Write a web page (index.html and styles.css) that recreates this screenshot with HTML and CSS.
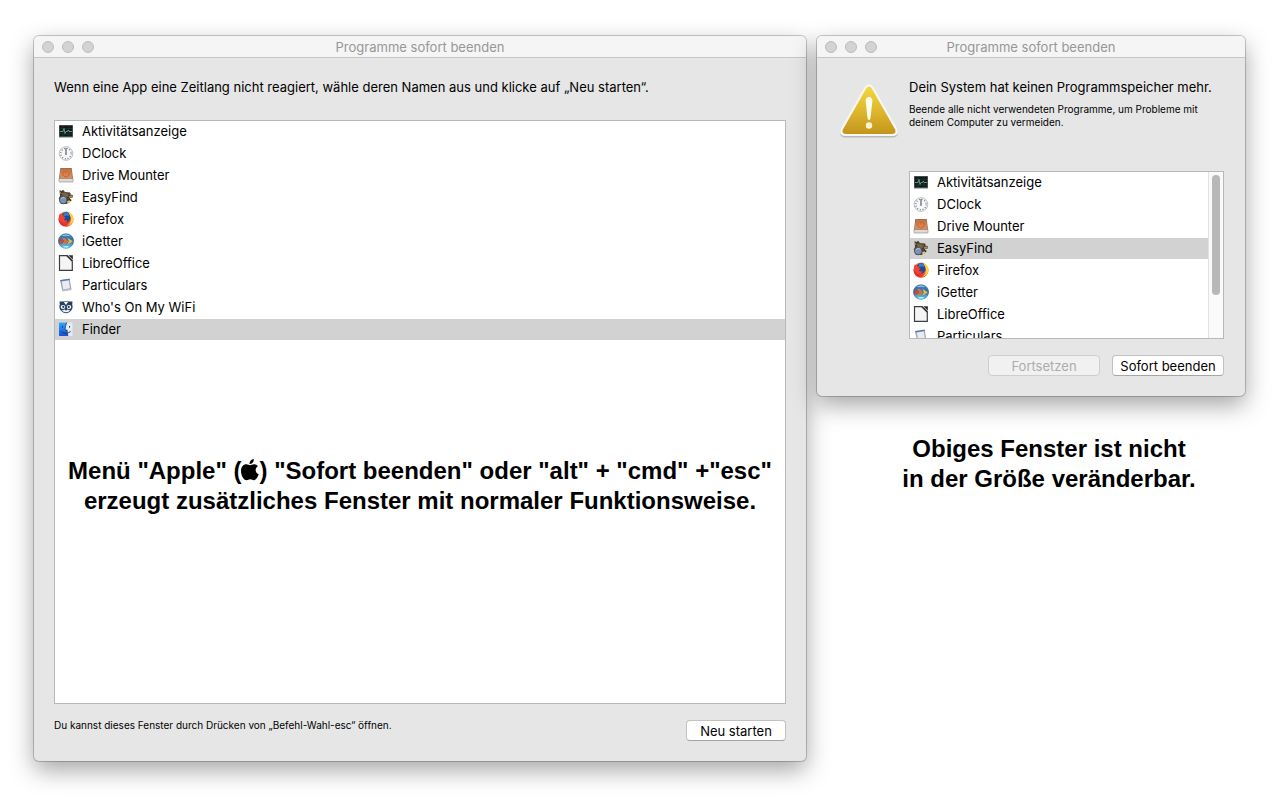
FILE: index.html
```html
<!DOCTYPE html>
<html lang="de">
<head>
    <meta charset="UTF-8">
    <meta name="viewport" content="width=device-width, initial-scale=1.0">
    <title>Programme sofort beenden</title>
    <link rel="stylesheet" href="styles.css">
</head>
<body>
    <svg class="icon-defs" width="0" height="0" aria-hidden="true">
        <defs>
            <linearGradient id="copper" x1="0" y1="0" x2="0" y2="1">
                <stop offset="0" stop-color="#b87449"/>
                <stop offset="1" stop-color="#d8925f"/>
            </linearGradient>
            <linearGradient id="fire" x1="0" y1="1" x2="1" y2="0">
                <stop offset="0" stop-color="#d8113f"/>
                <stop offset="0.45" stop-color="#f2452a"/>
                <stop offset="0.7" stop-color="#fb9b1e"/>
                <stop offset="1" stop-color="#ffe23e"/>
            </linearGradient>
            <linearGradient id="globe" x1="0" y1="0" x2="0" y2="1">
                <stop offset="0" stop-color="#4a86bb"/>
                <stop offset="0.5" stop-color="#1f6cae"/>
                <stop offset="1" stop-color="#6fdcf2"/>
            </linearGradient>
            <linearGradient id="finderLeft" x1="0" y1="0" x2="0" y2="1">
                <stop offset="0" stop-color="#29a8f8"/>
                <stop offset="1" stop-color="#1b50d8"/>
            </linearGradient>
            <linearGradient id="warn" x1="0" y1="0" x2="0" y2="1">
                <stop offset="0" stop-color="#f2d83c"/>
                <stop offset="0.55" stop-color="#dcb52c"/>
                <stop offset="1" stop-color="#c4941c"/>
            </linearGradient>
        </defs>
        <symbol id="icon-activity" viewBox="0 0 16 16">
            <rect x="1" y="2" width="14" height="12.5" fill="#777c7c"/>
            <rect x="1.5" y="2.500" width="13" height="11" fill="#101a1b"/>
            <path d="M2 5.500h12M2 11h12M5 3v10M11 3v10" stroke="#263b39" stroke-width=".6"/>
            <path d="M2 8.500h3l1-3 1 5 1-2h1.500l.8-1.500.8 1.500H14" fill="none" stroke="#6fb8a2" stroke-width=".8"/>
        </symbol>
        <symbol id="icon-clock" viewBox="0 0 16 16">
            <circle cx="8" cy="8.500" r="6.800" fill="#f8f8fa" stroke="#b2b5bb" stroke-width=".9"/>
            <circle cx="8" cy="8.500" r="5.200" fill="none" stroke="#7c8088" stroke-width="1.400" stroke-dasharray="1 1.722"/>
            <path d="M8 3V9" stroke="#646a76" stroke-width="1.300"/>
            <circle cx="8" cy="9" r="1" fill="#8b8f98"/>
        </symbol>
        <symbol id="icon-drive" viewBox="0 0 16 16">
            <path d="M2.300 1h11.400l1.300 10.500v3.300H1v-3.300z" fill="#8f6548"/>
            <path d="M2.600 1.500h10.800l.9 9.700H1.700z" fill="url(#copper)"/>
            <path d="M1 11.500h14v2.800q0 .7-.7.700H1.700q-.7 0-.7-.7z" fill="#dedbd6" stroke="#8d8279" stroke-width=".6"/>
            <path d="M6 4.300a3.200 3.200 0 1 0 4 0M8 3v3.500" fill="none" stroke="#e8561e" stroke-width="1"/>
        </symbol>
        <symbol id="icon-easyfind" viewBox="0 0 16 16">
            <path d="M1.500 1l2 1L5 .7l2 2.200 5 .6 1.200 2.200 1.800.5v2l-3 1-.5 4-3 1.800H3L.7 9.500 2 7z" fill="#4b4030"/>
            <path d="M4 4l3-.5 4 2-2 3-4 .5z" fill="#786346"/>
            <path d="M11 7l3.800-.4v1.200l-3.500 1.300z" fill="#ad8b5a"/>
            <path d="M2 3l1.200 2M12 5l1.500 1" stroke="#a48c68"/>
            <circle cx="5.200" cy="11" r="3.800" fill="#7e91b0" stroke="#434b59" stroke-width=".8"/>
            <path d="M3.200 9.800q1.400-2 3.500-1" fill="none" stroke="#b6c6dc"/>
            <path d="M9 12.500l2.800-1.800.8 2.300-2.800 1.700z" fill="#e0c264"/>
            <path d="M10.800 9.500l2.500 1v1.800l-1.500-.3z" fill="#302b27"/>
        </symbol>
        <symbol id="icon-firefox" viewBox="0 0 16 16">
            <circle cx="8" cy="8.200" r="7.600" fill="url(#fire)"/>
            <path d="M3.500 5.200Q4.500 1 8.500.7q3.500.5 4 4.500.8 5-3.700 6.300Q4.500 11.600 3.500 8z" fill="#23459c"/>
            <path d="M5.500 2.100Q8 .6 10.300 1.700q1.400 1.500.7 3.300-3-1.500-4.700.8z" fill="#2b7fd0"/>
            <path d="M1.100 4.300L2 2.600l2.300 1.600 2.300-.2-.9 2 2.300.8-1.600 1.100q-1.300.7.4 1.400 1.300.5 2.800-.3-.7 2.500-3.100 2.700Q3 12 1.100 8z" fill="#f1452d"/>
            <path d="M10.200.8q6 3.200 5.200 8.500-1.500 5-6.900 5.700 5.400-3 4.500-8.300z" fill="#ffd33c"/>
        </symbol>
        <symbol id="icon-igetter" viewBox="0 0 16 16">
            <ellipse cx="8" cy="8" rx="7.600" ry="7.300" fill="url(#globe)" stroke="#286791" stroke-width=".6"/>
            <path d="M3.500 3Q8 0 12.500 3 8 2 3.500 3z" fill="#b8def2"/>
            <path d="M4.500 13.700q3.500-1.200 7 0-3.500 1.800-7 0z" fill="#adf6fa"/>
            <path d="M.8 5.800h2.400l2.600 2.500-2.600 2.500H.8l1.700-2.500z" fill="#d9452a"/>
            <path d="M4.600 5.300h2.300l3 3-3 2.900H4.600l2-2.900z" fill="#e8622a" stroke="#f3c05a" stroke-width=".3"/>
            <path d="M9.300 4.800l5.700 3.500-5.700 3.400 1.500-3.400z" fill="#f4b23e"/>
        </symbol>
        <symbol id="icon-libre" viewBox="0 0 16 16">
            <path d="M1.500.7H9L14.300 6v9.300H1.500z" fill="#f5f5f5" stroke="#3d3d3d" stroke-width="1.200"/>
            <path d="M9 .7L14.300 6" stroke="#333" stroke-width="1.500"/>
            <path d="M10.400.2h4.500v4.500z" fill="#303030"/>
        </symbol>
        <symbol id="icon-particulars" viewBox="0 0 16 16">
            <path d="M2 3l9.600-1.500 1.900 10.900L4.300 14z" fill="#9ba5b5"/>
            <path d="M3.800 4.600l7-1.100 1.200 7.800-6.800 1.100z" fill="#e8ebf2"/>
            <path d="M2.100 3.200l9.500-1.500.2 1-9.500 1.500z" fill="#5274a7"/>
            <path d="M4.300 13l9.100-1.300v1.500L4.400 14.600z" fill="#c3c6cd"/>
        </symbol>
        <symbol id="icon-wifi" viewBox="0 0 16 16">
            <path d="M1.500 2.500l3 .1Q8 1.700 11.500 2.600l3-.1-.3 3Q15.500 9.300 12.700 12q-1.500 2-4.700 2.300-3.200-.3-4.700-2.300Q.5 9.300 1.800 5.500z" fill="#253e61"/>
            <path d="M5.800 2.900q2.200-.5 4.400 0L8 6z" fill="#f4f7fb"/>
            <path d="M3.500 11.300q1.700 0 2.700-.9h3.600q1 .9 2.700.9-1.700 2-4.500 2t-4.500-2z" fill="#f4f7fb"/>
            <ellipse cx="5" cy="7.900" rx="2.300" ry="2" fill="#fff"/>
            <ellipse cx="11" cy="7.900" rx="2.300" ry="2" fill="#fff"/>
            <circle cx="5.300" cy="7.900" r="1.100" fill="#253e61"/>
            <circle cx="10.700" cy="7.900" r="1.100" fill="#253e61"/>
            <path d="M6.600 10h2.800L8 12z" fill="#253e61"/>
        </symbol>
        <symbol id="icon-finder" viewBox="0 0 16 16">
            <rect x="1" y="1.500" width="13.500" height="13.500" rx=".7" fill="#e3ebf7"/>
            <path d="M1 2.200q0-.7.7-.7h7.100Q7.200 5 7 9h2.100q0 3.700.8 6H1.700Q1 15 1 14.300z" fill="url(#finderLeft)"/>
            <path d="M8.800 1.500Q7.200 5 7 9h2.100q0 3.700.8 6" fill="none" stroke="#14305d" stroke-width=".7"/>
            <path d="M4.500 5v1.700M11.500 5v1.700M3.300 10.500q4.500 3.700 9.400 0" fill="none" stroke="#14305d" stroke-width=".9"/>
        </symbol>
    </svg>

    <main class="desktop">
        <section class="window window-main">
            <header class="titlebar">
                <div class="lights">
                    <button type="button" aria-label="Schließen"></button>
                    <button type="button" aria-label="Minimieren"></button>
                    <button type="button" aria-label="Zoomen"></button>
                </div>
                <h1>Programme sofort beenden</h1>
            </header>
            <div class="window-body">
                <p class="message">Wenn eine App eine Zeitlang nicht reagiert, wähle deren Namen aus und klicke auf „Neu starten“.</p>
                <div class="list-box">
                    <ul class="app-list" role="listbox" aria-label="Programme">
                        <li role="option"><svg><use href="#icon-activity"/></svg>Aktivitätsanzeige</li>
                        <li role="option"><svg><use href="#icon-clock"/></svg>DClock</li>
                        <li role="option"><svg><use href="#icon-drive"/></svg>Drive Mounter</li>
                        <li role="option"><svg><use href="#icon-easyfind"/></svg>EasyFind</li>
                        <li role="option"><svg><use href="#icon-firefox"/></svg>Firefox</li>
                        <li role="option"><svg><use href="#icon-igetter"/></svg>iGetter</li>
                        <li role="option"><svg><use href="#icon-libre"/></svg>LibreOffice</li>
                        <li role="option"><svg><use href="#icon-particulars"/></svg>Particulars</li>
                        <li role="option"><svg><use href="#icon-wifi"/></svg>Who's On My WiFi</li>
                        <li role="option" class="selected" aria-selected="true"><svg><use href="#icon-finder"/></svg>Finder</li>
                    </ul>
                    <p class="caption caption-main">Menü "Apple" (<svg class="apple" viewBox="0 0 18 22" role="img" aria-label="Apple"><path d="M12.800 0q.2 2.200-1.200 3.700Q10.300 5.100 8.500 5q-.2-2 1.200-3.500Q11 .2 12.800 0zM9.200 6.200c1 0 2-1 4-1 1.500 0 2.900.7 3.800 2-3.500 2-3 6.700.7 8.100-.8 2.400-2.700 5.900-4.700 5.900-1.500 0-2-.9-3.700-.9s-2.300.9-3.700.9C2.700 21.200 0 16.500 0 12c0-4.300 2.500-6.700 5.200-6.700 1.800 0 2.900.9 4 .9z"/></svg>) "Sofort beenden" oder "alt" + "cmd" +"esc"<br>erzeugt zusätzliches Fenster mit normaler Funktionsweise.</p>
                </div>
                <footer class="footer">
                    <small>Du kannst dieses Fenster durch Drücken von „Befehl-Wahl-esc“ öffnen.</small>
                    <button type="button" class="btn btn-restart">Neu starten</button>
                </footer>
            </div>
        </section>

        <div class="side">
            <section class="window">
                <header class="titlebar">
                    <div class="lights">
                        <button type="button" aria-label="Schließen"></button>
                        <button type="button" aria-label="Minimieren"></button>
                        <button type="button" aria-label="Zoomen"></button>
                    </div>
                    <h2>Programme sofort beenden</h2>
                </header>
                <div class="alert">
                    <svg class="warning" viewBox="0 0 60 58" role="img" aria-label="Warnung">
                        <path d="M25.300 5.500Q30-.8 34.700 5.500L58 46.500Q61 54 53.500 54.500H6.500Q-1 54 2 46.500z" fill="#8c8c8c" opacity=".5"/>
                        <path d="M25.300 4.500Q30-1.800 34.700 4.500L58 45.500Q61 52.500 53.500 53H6.500Q-1 52.500 2 45.500z" fill="#f7f7f5"/>
                        <path d="M27 5.700Q30 1.500 33 5.700L56 46.200Q58 50.500 53.300 51H6.700Q2 50.500 4 46.200z" fill="url(#warn)"/>
                        <path d="M26.600 17.500Q26.800 14 30 14t3.400 3.500L31.500 35q-.3 2-1.500 2t-1.500-2z" fill="#fffdf0"/>
                        <circle cx="30" cy="42.500" r="3.200" fill="#fff6d5"/>
                    </svg>
                    <div class="alert-body">
                        <p class="message">Dein System hat keinen Programmspeicher mehr.</p>
                        <p class="detail">Beende alle nicht verwendeten Programme, um Probleme mit deinem Computer zu vermeiden.</p>
                        <div class="list-box list-scroll">
                            <ul class="app-list" role="listbox" aria-label="Programme">
                                <li role="option"><svg><use href="#icon-activity"/></svg>Aktivitätsanzeige</li>
                                <li role="option"><svg><use href="#icon-clock"/></svg>DClock</li>
                                <li role="option"><svg><use href="#icon-drive"/></svg>Drive Mounter</li>
                                <li role="option" class="selected" aria-selected="true"><svg><use href="#icon-easyfind"/></svg>EasyFind</li>
                                <li role="option"><svg><use href="#icon-firefox"/></svg>Firefox</li>
                                <li role="option"><svg><use href="#icon-igetter"/></svg>iGetter</li>
                                <li role="option"><svg><use href="#icon-libre"/></svg>LibreOffice</li>
                                <li role="option"><svg><use href="#icon-particulars"/></svg>Particulars</li>
                            </ul>
                            <div class="scrollbar"><div class="thumb"></div></div>
                        </div>
                        <div class="actions">
                            <button type="button" class="btn" disabled>Fortsetzen</button>
                            <button type="button" class="btn">Sofort beenden</button>
                        </div>
                    </div>
                </div>
            </section>
            <p class="caption caption-side">Obiges Fenster ist nicht<br>in der Größe veränderbar.</p>
        </div>
    </main>
</body>
</html>
```
FILE: styles.css
```css
* {
    box-sizing: border-box;
}
body {
    margin: 0;
    background: #fff;
    color: #000;
    font-family: Inter, "Liberation Sans", sans-serif;
    font-size: 13px;
    line-height: 16px;
}
h1, h2, p, ul {
    margin: 0;
    padding: 0;
}
.icon-defs {
    position: absolute;
}
.desktop {
    display: flex;
    gap: 11px;
    min-height: 100vh;
    padding: 36px 41px 35px 34px;
}

/* windows */
.window {
    display: flex;
    flex-direction: column;
    background: #e6e6e6;
    border-radius: 5px;
    box-shadow: 0 0 0 1px rgba(0, 0, 0, 0.2), 0 9px 24px rgba(0, 0, 0, 0.36);
}
.window-main {
    flex: 1;
}
.side {
    flex: none;
    width: 428px;
}
.titlebar {
    display: grid;
    grid-template-columns: 60px 1fr 60px;
    align-items: center;
    height: 22px;
    padding: 0 8px;
    background: #f5f5f5;
    border-bottom: 1px solid #c6c6c6;
    border-radius: 5px 5px 0 0;
}
.titlebar h1, .titlebar h2 {
    color: #979797;
    font-size: 13px;
    font-weight: normal;
    text-align: center;
}
.lights {
    display: flex;
    gap: 8px;
}
.lights button {
    width: 12px;
    height: 12px;
    padding: 0;
    background: #d3d3d3;
    border: 1px solid #bdbdbd;
    border-radius: 50%;
}
.window-body {
    flex: 1;
    display: flex;
    flex-direction: column;
    padding: 21px 20px 20px;
}

/* program lists */
.list-box {
    flex: 1;
    margin-top: 25px;
    background: #fff;
    border: 1px solid #b8b8b8;
}
.app-list {
    list-style: none;
}
.app-list li {
    display: flex;
    align-items: center;
    gap: 8px;
    height: 21px;
    margin-bottom: 1px;
    padding: 0 0 2px 3px;
    white-space: nowrap;
}
.app-list svg {
    width: 16px;
    height: 16px;
}
.app-list .selected {
    background: #d2d2d2;
}
.list-scroll {
    display: flex;
    height: 168px;
    margin-top: 42px;
    overflow: hidden;
}
.list-scroll .app-list {
    flex: 1;
}
.scrollbar {
    width: 15px;
    padding: 3px;
    background: #fafafa;
    border-left: 1px solid #e2e2e2;
}
.thumb {
    width: 8px;
    height: 120px;
    background: #b8b8b8;
    border-radius: 4px;
}

/* alert */
.alert {
    display: flex;
    gap: 10px;
    padding: 21px 21px 20px 22px;
}
.warning {
    flex: none;
    width: 60px;
    height: 58px;
    margin-top: 4px;
}
.alert-body {
    flex: 1;
}
.detail {
    margin-top: 8px;
    font-size: 10px;
    line-height: 13px;
}

/* buttons */
.btn {
    width: 112px;
    height: 21px;
    padding: 0;
    background: #fff;
    color: #000;
    border: 1px solid #c2c2c2;
    border-bottom-color: #a6a6a6;
    border-radius: 4px;
    font: inherit;
}
.btn:disabled {
    background: #f1f1f1;
    color: #acacac;
    border-color: #cecece;
}
.btn-restart {
    width: 100px;
}
.actions {
    display: flex;
    justify-content: flex-end;
    gap: 12px;
    margin-top: 16px;
}
.footer {
    display: flex;
    justify-content: space-between;
    margin-top: 16px;
}
.footer small {
    font-size: 10px;
    line-height: 10px;
}

/* captions */
.caption {
    font-family: "Liberation Sans", Arial, sans-serif;
    font-size: 24px;
    font-weight: bold;
    line-height: 30px;
    text-align: center;
    white-space: nowrap;
}
.caption-main {
    margin-top: 116px;
}
.caption-side {
    margin-top: 38px;
    padding-left: 36px;
}
.apple {
    width: 18px;
    height: 22px;
    vertical-align: -2px;
}
```
